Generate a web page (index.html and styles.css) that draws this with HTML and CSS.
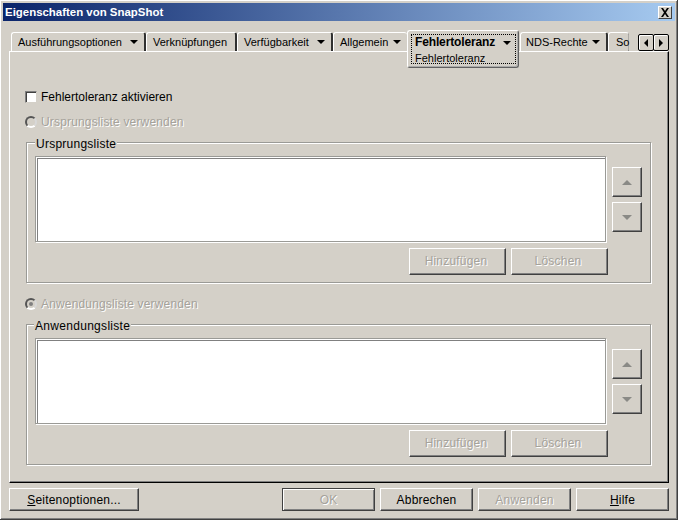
FILE: index.html
```html
<!DOCTYPE html>
<html lang="de">
<head>
<meta charset="utf-8">
<title>Eigenschaften von SnapShot</title>
<link rel="stylesheet" href="styles.css">
</head>
<body>
<div class="window">
  <div class="titlebar">
    <span class="title">Eigenschaften von SnapShot</span>
    <span class="close"><svg width="10" height="9" viewBox="0 0 10 9"><path d="M1 0h2l2 3 2-3h2L6 4.500 9 9H7L5 6 3 9H1l3-4.500z" fill="#000"/></svg></span>
  </div>
  <div class="tabstrip">
    <div class="tab w1">Ausführungsoptionen<i class="caret"></i></div>
    <div class="tab w2">Verknüpfungen</div>
    <div class="tab w3">Verfügbarkeit<i class="caret"></i></div>
    <div class="tab w4">Allgemein<i class="caret"></i></div>
    <div class="tab active">
      <div class="focus">
        <div class="active-head"><b>Fehlertoleranz</b><i class="caret"></i></div>
        <div class="sub">Fehlertoleranz</div>
      </div>
    </div>
    <div class="tab w5">NDS-Rechte<i class="caret"></i></div>
    <div class="tab w6">So</div>
    <div class="scroller">
      <span class="scroll"><i class="tri-left"></i></span>
      <span class="scroll"><i class="tri-right"></i></span>
    </div>
  </div>
  <div class="panel">
    <label class="check"><span class="box"></span>Fehlertoleranz aktivieren</label>
    <div class="radio r1"><span class="dot"></span><span class="dim">Ursprungsliste verwenden</span></div>
    <section class="group">
      <h2 class="legend">Ursprungsliste</h2>
      <div class="group-row">
        <div class="list"></div>
        <div class="arrows">
          <span class="arrow"><i class="tri-up"></i></span>
          <span class="arrow"><i class="tri-down"></i></span>
        </div>
      </div>
      <div class="actions">
        <button class="btn dim-btn">Hinzufügen</button>
        <button class="btn dim-btn">Löschen</button>
      </div>
    </section>
    <div class="radio r2"><span class="dot on"></span><span class="dim">Anwendungsliste verwenden</span></div>
    <section class="group">
      <h2 class="legend legend2">Anwendungsliste</h2>
      <div class="group-row">
        <div class="list"></div>
        <div class="arrows">
          <span class="arrow"><i class="tri-up"></i></span>
          <span class="arrow"><i class="tri-down"></i></span>
        </div>
      </div>
      <div class="actions">
        <button class="btn dim-btn">Hinzufügen</button>
        <button class="btn dim-btn">Löschen</button>
      </div>
    </section>
  </div>
  <div class="footer">
    <button class="fbtn seiten"><u>S</u>eitenoptionen...</button>
    <span class="spacer"></span>
    <button class="fbtn ok dim-btn">OK</button>
    <button class="fbtn std">Abbrechen</button>
    <button class="fbtn std dim-btn">Anwenden</button>
    <button class="fbtn std"><u>H</u>ilfe</button>
  </div>
</div>
</body>
</html>
```
FILE: styles.css
```css
* { box-sizing: border-box; }
html, body { margin: 0; padding: 0; }
body { background: #d4d0c8; font: 12px/14px "Liberation Sans", Arial, sans-serif; color: #000; }
.window {
  width: 678px; height: 520px; display: flex; flex-direction: column;
  background: #d4d0c8; padding: 1px 0 0 1px;
  border-right: 1px solid #404040; border-bottom: 1px solid #404040;
  box-shadow: inset 1px 1px 0 #fff, inset -1px -1px 0 #808080;
}
.titlebar {
  height: 18px; margin: 2px 2px 0 2px; padding: 0 3px 0 2px;
  display: flex; align-items: center; justify-content: space-between;
  background: linear-gradient(90deg, #0a246a, #a6caf0);
}
.title { color: #fff; font-weight: bold; font-size: 11.450px; }
.close {
  width: 14px; height: 13px; background: #d4d0c8; display: flex; align-items: center; justify-content: center;
  border: 1px solid; border-color: #fff #404040 #404040 #fff;
}
.tabstrip { height: 30px; padding: 11px 0 0 10px; display: flex; align-items: flex-start; position: relative; z-index: 1; font-size: 11px; }
.tab {
  height: 19px; padding: 2px 0 0 6px; white-space: nowrap;
  border-top: 1px solid #fff; border-left: 1px solid #fff; border-right: 2px solid #303030;
  border-top-left-radius: 3px; border-top-right-radius: 3px; background: #d4d0c8;
  display: flex; align-items: flex-start;
}
.w1 { width: 135px; } .w2 { width: 91px; } .w3 { width: 96px; }
.w4 { width: 74px; border-right: 0; }
.w5 { width: 88px; padding-left: 5px; } .w6 { width: 21px; border-right: 1px dotted #808080; padding-left: 7px; }
.caret { width: 0; height: 0; margin: 5px 6px 0 auto; border: 4px solid transparent; border-top-color: #000; border-bottom: 0; }
.active {
  width: 112px; height: 38px; margin: -2px 1px 0 0; padding: 3px 0 0 3px;
  border: 1px solid #fff; border-right: 1px solid #606060; border-bottom: 1px solid #606060;
  border-radius: 3px; box-shadow: inset -1px -1px 0 #aaa;
}
.focus { width: 105px; height: 30px; border: 1px dotted #000; padding: 0 0 0 3px; }
.active-head { display: flex; }
.active-head b { font-size: 12px; letter-spacing: -0.14px; }
.active-head .caret { margin-right: 4px; margin-top: 6px; }
.sub { font-size: 11px; margin-top: 2px; }
.scroller { margin: 2px 0 0 9px; display: flex; }
.scroll {
  width: 16px; height: 17px; margin-right: -1px; background: #d4d0c8;
  border: 1px solid #000; border-radius: 2px; box-shadow: inset 1px 1px 0 #fff;
  display: flex; align-items: center; justify-content: center;
}
.tri-left { border: 4px solid transparent; border-right-color: #000; border-left: 0; }
.tri-right { border: 4px solid transparent; border-left-color: #000; border-right: 0; }
.panel {
  width: 660px; height: 432px; margin-left: 8px; padding: 38px 16px 0 16px;
  border-top: 1px solid #fff; border-left: 1px solid #fff;
  border-right: 1px solid #000; border-bottom: 1px solid #000;
  box-shadow: inset -1px -1px 0 #808080;
}
.check { display: flex; align-items: center; height: 13px; }
.box { width: 12px; height: 12px; margin: 0 4px 0 -1px; background: #fff; border: 1px solid; border-color: #808080 #d4d0c8 #d4d0c8 #808080; box-shadow: inset 1px 1px 0 #404040; }
.radio { display: flex; align-items: center; height: 14px; margin-left: -1px; }
.r1 { margin-top: 12px; }
.r2 { margin-top: 14px; }
.dot { width: 12px; height: 12px; margin-right: 4px; border-radius: 50%; border: 2px solid; border-color: #555 #d8d8d8 #fff #555; background: #d4d0c8; display: flex; align-items: center; justify-content: center; }
.dot.on::after { content: ""; width: 4px; height: 4px; border-radius: 50%; background: #808080; }
.dim { color: #a5a29b; text-shadow: 1px 1px 0 #fff; letter-spacing: 0.16px; }
.group {
  position: relative; width: 625px; height: 141px; margin: 13px 0 0 0; padding: 13px 8px 0 8px;
  border: 1px solid #9a9a96; box-shadow: 1px 1px 0 #fff, inset 1px 1px 0 #fff;
}
.legend { position: absolute; top: -6px; left: 8px; margin: 0; padding: 0 1px; background: #d4d0c8; font: inherit; letter-spacing: 0.25px; }
.legend2 { left: 7px; letter-spacing: 0.3px; }
.group-row { display: flex; }
.list {
  width: 572px; height: 86px; background: #fff; border: 1px solid #9a9a96;
  box-shadow: 1px 1px 0 #fff, inset 1px 1px 0 #fff, inset 2px 2px 0 #808080;
}
.arrows { display: flex; flex-direction: column; gap: 5px; margin: 11px 0 0 6px; }
.arrow {
  width: 30px; height: 30px; border: 1px solid; border-color: #fff #404040 #404040 #fff;
  box-shadow: inset -1px -1px 0 #808080; display: flex; align-items: center; justify-content: center;
}
.tri-up { border: 5px solid transparent; border-bottom-color: #8a8a86; border-top: 0; }
.tri-down { border: 5px solid transparent; border-top-color: #8a8a86; border-bottom: 0; }
.actions { display: flex; gap: 5px; margin: 6px 0 0 374px; }
.btn {
  width: 97px; height: 27px; padding: 0 3px 2px 0; font: inherit; background: #d4d0c8; letter-spacing: 0.2px;
  border: 1px solid; border-color: #fff #404040 #404040 #fff; box-shadow: inset -1px -1px 0 #808080; border-radius: 0;
}
.dim-btn { color: #a5a29b; text-shadow: 1px 1px 0 #fff; }
.footer { display: flex; margin: 5px 0 0 8px; height: 24px; gap: 5px; width: 660px; }
.fbtn {
  height: 23px; width: 93px; padding: 0; font: inherit; background: #d4d0c8; letter-spacing: 0.2px;
  border: 1px solid; border-color: #fff #404040 #404040 #fff; box-shadow: inset -1px -1px 0 #808080; border-radius: 0;
}
.seiten { width: 130px; }
.spacer { flex: 1; }
.ok { border: 1px solid #404040; box-shadow: inset 1px 1px 0 #fff, inset -1px -1px 0 #808080; }
```
